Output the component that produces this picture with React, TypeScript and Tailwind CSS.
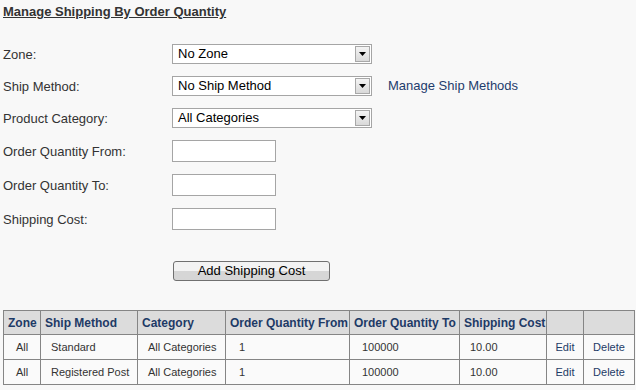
import React from 'react';

type Rate = {
  zone: string;
  method: string;
  category: string;
  from: string;
  to: string;
  cost: string;
};

const rates: Rate[] = [
  { zone: 'All', method: 'Standard', category: 'All Categories', from: '1', to: '100000', cost: '10.00' },
  { zone: 'All', method: 'Registered Post', category: 'All Categories', from: '1', to: '100000', cost: '10.00' },
];

function Select({ value }: { value: string }) {
  return (
    <div className="flex h-[20px] w-[200px] items-stretch border border-[#a5a5a5] bg-white p-px">
      <span className="flex-1 pl-[4px] text-[13px] leading-[16px] text-black">{value}</span>
      <span className="flex w-[15px] items-center justify-center border border-[#a8a8a8] bg-gradient-to-b from-[#f4f4f4] to-[#d9d9d9]">
        <svg width="7" height="4" viewBox="0 0 7 4">
          <path d="M0 0h7L3.5 4z" fill="#000" />
        </svg>
      </span>
    </div>
  );
}

function Field({ label, children }: { label: string; children: React.ReactNode }) {
  return (
    <div className="flex items-center">
      <span className="w-[169px] text-[13px] leading-[15px] text-[#333]">{label}</span>
      {children}
    </div>
  );
}

function TextBox() {
  return <div className="h-[22px] w-[104px] border border-[#a5a5a5] bg-white" />;
}

export default function App() {
  const th = 'whitespace-nowrap border border-[#858585] px-[4px] text-left text-[12px] font-bold text-[#1e3a66]';
  const td = 'whitespace-nowrap border border-[#858585] text-[11px]';

  return (
    <div className="h-[390px] w-[636px] overflow-hidden bg-[#f8f8f8] pl-[3px] pt-[4px] font-['Liberation_Sans',Arial,sans-serif]">
      <div className="text-[13px] leading-[15px] font-bold text-[#333] underline">Manage Shipping By Order Quantity</div>

      {/* Form */}
      <div className="mt-[25px] flex flex-col gap-[12px]">
        <Field label="Zone:">
          <Select value="No Zone" />
        </Field>
        <Field label="Ship Method:">
          <Select value="No Ship Method" />
          <span className="ml-[16px] text-[13px] text-[#1e3c6c]">Manage Ship Methods</span>
        </Field>
        <Field label="Product Category:">
          <Select value="All Categories" />
        </Field>
        <Field label="Order Quantity From:">
          <TextBox />
        </Field>
        <Field label="Order Quantity To:">
          <TextBox />
        </Field>
        <Field label="Shipping Cost:">
          <TextBox />
        </Field>
      </div>

      <button className="ml-[170px] mt-[31px] block h-[20px] w-[157px] rounded-[3px] border border-[#707070] bg-gradient-to-b from-[#f3f3f3] from-50% to-[#d6d6d6] to-50% text-[13px] leading-[16px] text-black">
        Add Shipping Cost
      </button>

      {/* Rates table */}
      <table className="mt-[29px] w-[631px] table-fixed border-collapse">
        <colgroup>
          <col className="w-[37px]" />
          <col className="w-[97px]" />
          <col className="w-[88px]" />
          <col className="w-[124px]" />
          <col className="w-[110px]" />
          <col className="w-[87px]" />
          <col className="w-[37px]" />
          <col className="w-[51px]" />
        </colgroup>
        <thead>
          <tr className="h-[24px] bg-[#dcdcdc]">
            <th className={th}>Zone</th>
            <th className={th}>Ship Method</th>
            <th className={th}>Category</th>
            <th className={th}>Order Quantity From</th>
            <th className={th}>Order Quantity To</th>
            <th className={th}>Shipping Cost</th>
            <th className={th}></th>
            <th className={th}></th>
          </tr>
        </thead>
        <tbody>
          {rates.map((r, i) => (
            <tr key={i} className="h-[25px] bg-[#fafafa] text-[#333]">
              <td className={`${td} text-center`}>{r.zone}</td>
              <td className={`${td} pl-[10px]`}>{r.method}</td>
              <td className={`${td} pl-[10px]`}>{r.category}</td>
              <td className={`${td} pl-[13px]`}>{r.from}</td>
              <td className={`${td} pl-[12px]`}>{r.to}</td>
              <td className={`${td} pl-[10px]`}>{r.cost}</td>
              <td className={`${td} text-center text-[#1e3a66]`}>Edit</td>
              <td className={`${td} text-center text-[#1e3a66]`}>Delete</td>
            </tr>
          ))}
        </tbody>
      </table>
    </div>
  );
}
